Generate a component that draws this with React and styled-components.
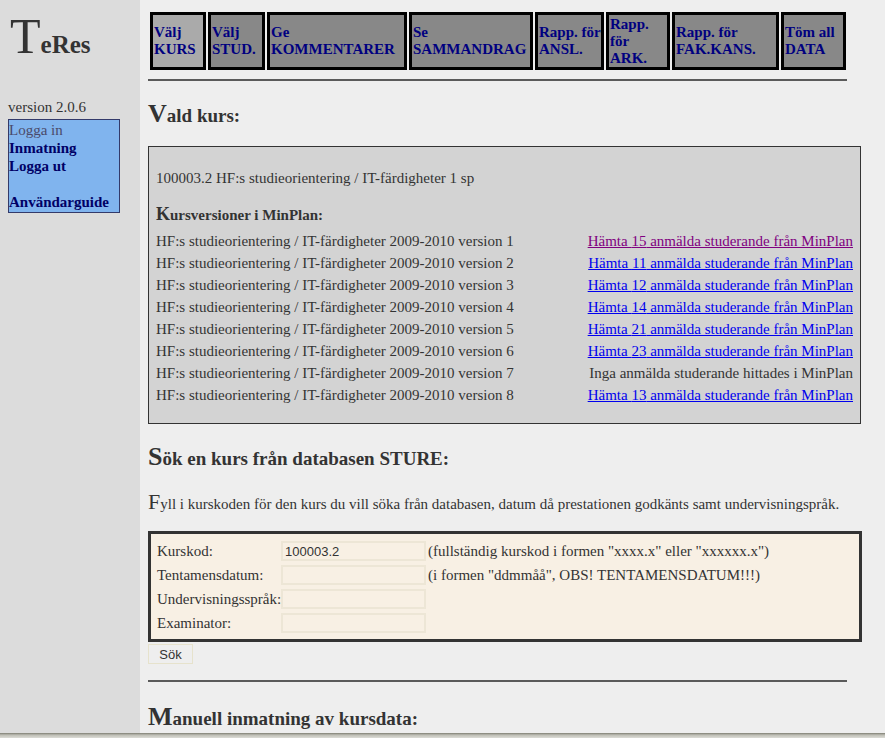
import React from 'react';
import styled, { createGlobalStyle } from 'styled-components';

const GlobalStyle = createGlobalStyle`
  html, body {
    margin: 0;
    padding: 0;
  }
  body {
    background: #eeeeee;
    font-family: "Liberation Serif", "Times New Roman", serif;
    color: #333333;
    font-size: 15px;
  }
`;

const Page = styled.div`
  display: flex;
  min-height: 100vh;
`;

const SideBar = styled.div`
  width: 140px;
  flex-shrink: 0;
  background: #dcdcdc;
  padding: 0 0 0 8px;
  box-sizing: border-box;
`;

const Logo = styled.div`
  margin: 12px 0 0 2px;
  font-size: 25px;
  font-weight: bold;
  line-height: 48px;
  color: #333;
  height: 48px;
  &::first-letter {
    font-size: 50px;
    font-weight: normal;
    -webkit-text-stroke: 0.6px #333;
  }
`;

const Version = styled.div`
  margin-top: 38px;
  margin-bottom: 3px;
  line-height: 18px;
  font-size: 15px;
`;

const MenuBox = styled.div`
  width: 112px;
  box-sizing: border-box;
  background: #80b4ee;
  border: 1px solid #333a6a;
  padding: 1px 0 1px 0;
  line-height: 18px;
`;

const MenuItem = styled.a`
  display: block;
  height: 18px;
  color: ${p => (p.current ? '#4a4a6a' : '#000066')};
  font-weight: ${p => (p.current ? 'normal' : 'bold')};
  text-decoration: none;
`;

const Main = styled.div`
  flex: 1;
  padding-left: 8px;
`;

const Nav = styled.div`
  display: flex;
  gap: 2px;
  padding: 2px;
  margin-top: 10px;
`;

const NavButton = styled.a`
  box-sizing: border-box;
  width: ${p => p.w}px;
  height: 58px;
  border: 3px solid #000;
  background: ${p => (p.active ? '#aaaaaa' : '#888888')};
  color: #000080;
  font-weight: bold;
  font-size: 15px;
  line-height: 17px;
  padding: 0 1px;
  display: flex;
  flex-direction: column;
  justify-content: center;
  white-space: nowrap;
  cursor: pointer;
`;

const Rule = styled.div`
  width: 699px;
  height: 2px;
  background: #5a5a5a;
  margin-top: ${p => p.top}px;
`;

const Heading = styled.h2`
  margin: ${p => p.top}px 0 0 0;
  font-size: 19px;
  line-height: 24px;
  font-weight: bold;
  color: #333;
  &::first-letter {
    font-size: 26px;
  }
`;

const CourseBox = styled.div`
  width: 713px;
  box-sizing: border-box;
  margin-top: 18px;
  background: #d3d3d3;
  border: 1px solid #333;
  padding: 20px 7px 17px 7px;
  line-height: 22px;
`;

const CourseTitle = styled.div`
  margin-bottom: 14px;
`;

const SubHeading = styled.div`
  font-weight: bold;
  margin-bottom: 4px;
  &::first-letter {
    font-size: 18px;
  }
`;

const VersionRow = styled.div`
  display: flex;
  justify-content: space-between;
  height: 22px;
`;

const FetchLink = styled.a`
  color: ${p => (p.visited ? '#800080' : '#0000ee')};
  text-decoration: underline;
  cursor: pointer;
`;

const Intro = styled.p`
  margin: 20px 0 0 0;
  line-height: 22px;
  &::first-letter {
    font-size: 22px;
  }
`;

const FormBox = styled.div`
  width: 714px;
  box-sizing: border-box;
  margin-top: 16px;
  background: #f8f0e4;
  border: 3px solid #333;
  padding: 5px 6px 4px 6px;
  display: grid;
  grid-template-columns: 124px 146px auto;
  grid-auto-rows: 24px;
  align-items: center;
`;

const Label = styled.span`
  white-space: nowrap;
`;

const Field = styled.input`
  box-sizing: border-box;
  width: 145px;
  height: 20px;
  border: 2px solid #ede6d6;
  background: #f8f0e4;
  font-family: "Liberation Sans", Arial, sans-serif;
  font-size: 13px;
  color: #333;
  padding: 0 2px;
  outline: none;
`;

const Hint = styled.span`
  padding-left: 1px;
  white-space: nowrap;
`;

const SearchButton = styled.button`
  display: block;
  margin-top: 2px;
  width: 45px;
  height: 20px;
  background: #eeeeee;
  border: 1px solid #e6e2cc;
  font-family: "Liberation Sans", Arial, sans-serif;
  font-size: 13px;
  color: #333;
  padding: 0;
  cursor: pointer;
`;

const WindowEdge = styled.div`
  position: fixed;
  left: 0;
  right: 0;
  bottom: 0;
  height: 5px;
  background: linear-gradient(#7e7e72, #bdbdb4 40%, #dcdcd6);
`;

const navItems = [
  { w: 56, lines: ['Välj', 'KURS'], active: true },
  { w: 57, lines: ['Välj', 'STUD.'] },
  { w: 140, lines: ['Ge', 'KOMMENTARER'] },
  { w: 124, lines: ['Se', 'SAMMANDRAG'] },
  { w: 69, lines: ['Rapp. för', 'ANSL.'] },
  { w: 64, lines: ['Rapp.', 'för', 'ARK.'] },
  { w: 107, lines: ['Rapp. för', 'FAK.KANS.'] },
  { w: 65, lines: ['Töm all', 'DATA'] },
];

const versions = [
  { n: 1, count: 15, visited: true },
  { n: 2, count: 11 },
  { n: 3, count: 12 },
  { n: 4, count: 14 },
  { n: 5, count: 21 },
  { n: 6, count: 23 },
  { n: 7, count: 0 },
  { n: 8, count: 13 },
];

const fields = [
  { label: 'Kurskod:', value: '100003.2', hint: '(fullständig kurskod i formen "xxxx.x" eller "xxxxxx.x")' },
  { label: 'Tentamensdatum:', value: '', hint: '(i formen "ddmmåå", OBS! TENTAMENSDATUM!!!)' },
  { label: 'Undervisningsspråk:', value: '', hint: '' },
  { label: 'Examinator:', value: '', hint: '' },
];

export default function App() {
  return (
    <>
      <GlobalStyle />
      <Page>
        <SideBar>
          <Logo>TeRes</Logo>
          <Version>version 2.0.6</Version>
          <MenuBox>
            <MenuItem current>Logga in</MenuItem>
            <MenuItem>Inmatning</MenuItem>
            <MenuItem>Logga ut</MenuItem>
            <MenuItem />
            <MenuItem>Användarguide</MenuItem>
          </MenuBox>
        </SideBar>
        <Main>
          <Nav>
            {navItems.map((item, i) => (
              <NavButton key={i} w={item.w} active={item.active}>
                {item.lines.map((l, j) => (
                  <span key={j}>{l}</span>
                ))}
              </NavButton>
            ))}
          </Nav>
          <Rule top={7} />
          <Heading top={21}>Vald kurs:</Heading>
          <CourseBox>
            <CourseTitle>100003.2 HF:s studieorientering / IT-färdigheter 1 sp</CourseTitle>
            <SubHeading>Kursversioner i MinPlan:</SubHeading>
            {versions.map(v => (
              <VersionRow key={v.n}>
                <span>HF:s studieorientering / IT-färdigheter 2009-2010 version {v.n}</span>
                {v.count ? (
                  <FetchLink visited={v.visited}>
                    Hämta {v.count} anmälda studerande från MinPlan
                  </FetchLink>
                ) : (
                  <span>Inga anmälda studerande hittades i MinPlan</span>
                )}
              </VersionRow>
            ))}
          </CourseBox>
          <Heading top={21}>Sök en kurs från databasen STURE:</Heading>
          <Intro>
            Fyll i kurskoden för den kurs du vill söka från databasen, datum då prestationen godkänts samt undervisningspråk.
          </Intro>
          <FormBox>
            {fields.map(f => (
              <React.Fragment key={f.label}>
                <Label>{f.label}</Label>
                <Field defaultValue={f.value} />
                <Hint>{f.hint}</Hint>
              </React.Fragment>
            ))}
          </FormBox>
          <SearchButton>Sök</SearchButton>
          <Rule top={16} />
          <Heading top={23}>Manuell inmatning av kursdata:</Heading>
        </Main>
      </Page>
      <WindowEdge />
    </>
  );
}
